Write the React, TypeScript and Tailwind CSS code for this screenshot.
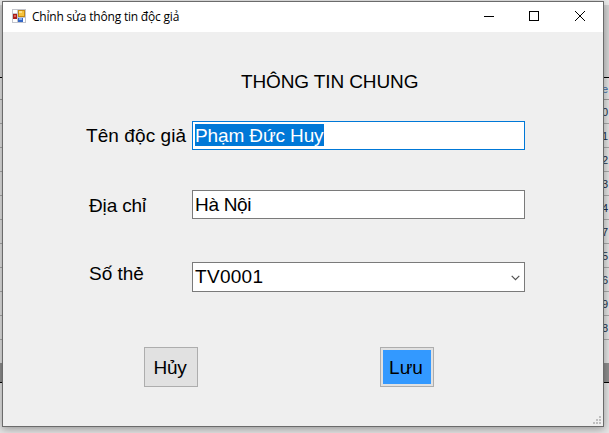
import React from "react";

const rowDigits = ["e", "0", "1", "2", "3", "4", "7", "5", "6", "9", "8"];

function ParentWindow() {
  return (
    <div className="flex h-[433px] w-[609px] flex-col bg-[#e2e2e2]">
      <div className="h-[5px] shrink-0 bg-[#ececec]" />
      <div className="h-[72px] shrink-0 bg-[#d4d4d4]" />
      <div className="h-px shrink-0 bg-black" />
      {rowDigits.map((digit, i) => (
        <div
          key={i}
          className={
            "flex shrink-0 items-center justify-end border-b pt-[2px] pr-[1px] text-[11px] leading-none " +
            (i === 0
              ? "h-[22px] border-[#9a9a9a] text-[#3c6ea8]"
              : "h-[24px] border-[#a8a8a8] text-[#20304a]")
          }
        >
          {digit}
        </div>
      ))}
      <div className="h-[23px] shrink-0" />
      <div className="h-[19px] shrink-0 bg-[#8e8e8e]" />
      <div className="h-px shrink-0 bg-black" />
      <div className="grow bg-[#e4e4e4]" />
    </div>
  );
}

function FormIcon() {
  return (
    <svg className="mb-[2px]" width="14" height="14" viewBox="0 0 14 14" shapeRendering="crispEdges">
      <rect width="14" height="14" fill="#c3c5cc" />
      <rect x="1" y="1" width="4" height="3" fill="#fff" />
      <rect x="1" y="10" width="4" height="3" fill="#fff" />
      <rect x="11" y="9" width="2" height="4" fill="#fff" />
      <rect x="1" y="5" width="4" height="5" fill="#a91f1c" />
      <rect x="2" y="6" width="2" height="2" fill="#dc6253" />
      <rect x="6" y="1" width="7" height="7" fill="#c58a12" />
      <rect x="7" y="2" width="5" height="5" fill="#f6c33b" />
      <rect x="7" y="2" width="3" height="2" fill="#fde08a" />
      <rect x="6" y="9" width="5" height="4" fill="#3467c5" />
      <rect x="7" y="9" width="3" height="2" fill="#83aef2" />
    </svg>
  );
}

function TitleBar() {
  return (
    <div className="flex h-[30px] shrink-0 items-center bg-white pl-[9px]">
      <FormIcon />
      <span className="ml-[6px] grow whitespace-nowrap font-['Open_Sans','Noto_Sans',sans-serif] text-[12px] leading-[16px] tracking-[-0.2px]">
        Chỉnh sửa thông tin độc giả
      </span>
      <div className="flex items-center pr-[18px] pb-[2px]">
        <svg width="10" height="10" viewBox="0 0 10 10" shapeRendering="crispEdges">
          <rect y="5" width="10" height="1" />
        </svg>
        <svg className="ml-[35px]" width="10" height="10" viewBox="0 0 10 10">
          <rect x="0.5" y="0.5" width="9" height="9" fill="none" stroke="#000" />
        </svg>
        <svg className="ml-[36px]" width="10" height="10" viewBox="0 0 10 10">
          <path d="M0 0L10 10M10 0L0 10" fill="none" stroke="#000" />
        </svg>
      </div>
    </div>
  );
}

function SizeGrip() {
  return (
    <svg width="8" height="8" viewBox="0 0 8 8" fill="#bfbfbf" shapeRendering="crispEdges">
      <path d="M6 0h2v2h-2zM3 3h2v2h-2zM6 3h2v2h-2zM0 6h2v2h-2zM3 6h2v2h-2zM6 6h2v2h-2z" />
    </svg>
  );
}

export default function App() {
  return (
    <div className="grid h-[433px] w-[609px] overflow-hidden font-['Liberation_Sans',Arial,sans-serif] text-black *:[grid-area:1/1]">
      <ParentWindow />
      <div className="z-10 mt-px ml-[2px] flex h-[426px] w-[602px] flex-col border border-[#6b6b6b] bg-[#efefef] shadow-[0_2px_8px_rgba(0,0,0,0.35)]">
        <TitleBar />
        <div className="flex grow flex-col text-[19px] leading-[22px]">
          <h1 className="mt-[39px] ml-[238px] whitespace-nowrap tracking-[-0.12px]">THÔNG TIN CHUNG</h1>
          <div className="mt-[28px] flex h-[29px]">
            <label className="mt-[4px] w-[189px] pl-[83px] tracking-[0.08px] whitespace-nowrap">Tên độc giả</label>
            <div className="w-[333px] border border-[#0078d7] bg-white pt-[2px] pl-[2px]">
              <span className="block h-[22px] w-[129px] whitespace-nowrap bg-[#0078d7] pt-px tracking-[-0.12px] text-white">
                Phạm Đức Huy
              </span>
            </div>
          </div>
          <div className="mt-[40px] flex h-[29px]">
            <label className="mt-[5px] w-[189px] pl-[86px] tracking-[-0.15px]">Địa chỉ</label>
            <div className="w-[333px] border border-[#7a7a7a] bg-white pt-[3px] pl-[2px] tracking-[-0.3px]">Hà Nội</div>
          </div>
          <div className="mt-[43px] flex h-[30px]">
            <label className="mt-px w-[189px] pl-[86px]">Số thẻ</label>
            <div className="flex w-[333px] items-center justify-between border border-[#7a7a7a] bg-white pr-[4px] pl-[2px]">
              <span className="tracking-[0.3px]">TV0001</span>
              <svg width="9" height="6" viewBox="0 0 9 6" className="mt-[2px]">
                <path d="M0.7 0.8L4.5 4.6L8.3 0.8" fill="none" stroke="#505050" strokeWidth="1.2" />
              </svg>
            </div>
          </div>
          <div className="mt-[55px] ml-[141px] flex gap-[182px]">
            <button className="h-[40px] w-[54px] border border-[#adadad] bg-[#e1e1e1] pt-[2px] pr-[2px] tracking-[-0.3px]">
              Hủy
            </button>
            <button className="h-[40px] w-[54px] border border-[#adadad] bg-[#e1e1e1] p-[2px]">
              <span className="flex h-full items-center justify-center bg-[#3399ff] pt-[2px] pr-[2px]">Lưu</span>
            </button>
          </div>
          <div className="mt-auto flex justify-end pr-[2px] pb-[2px]">
            <SizeGrip />
          </div>
        </div>
      </div>
    </div>
  );
}
